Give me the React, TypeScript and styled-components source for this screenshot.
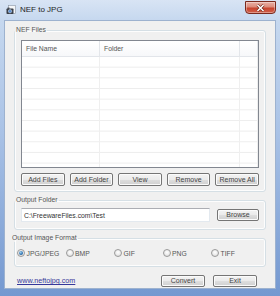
import styled, { createGlobalStyle } from 'styled-components'

const GlobalStyle = createGlobalStyle`
	html, body {
		margin: 0;
		padding: 0;
	}
	body {
		width: 280px;
		height: 296px;
		overflow: hidden;
		background: #7c9ed2;
		font-family: 'Liberation Sans', Arial, sans-serif;
	}
`

const Window = styled.div`
	box-sizing: border-box;
	width: 280px;
	height: 296px;
	display: flex;
	flex-direction: column;
	padding: 0 4px 7px;
	background: linear-gradient(
		180deg,
		#d8e4f4 0px,
		#c6d8ef 20px,
		#a9c2e6 45%,
		#7498d0 100%
	);
`
const TitleBar = styled.div`
	height: 20px;
	display: flex;
	align-items: flex-start;
	flex-shrink: 0;
`
const TitleIcon = styled.svg`
	width: 10px;
	height: 10px;
	margin: 5px 0 0 2px;
`
const TitleText = styled.span`
	margin: 5px 0 0 4px;
	font-size: 8px;
	line-height: 10px;
	color: #1e1e1e;
`
const CloseButton = styled.div`
	box-sizing: border-box;
	margin: 1px 0 0 auto;
	width: 31px;
	height: 13px;
	display: flex;
	align-items: center;
	justify-content: center;
	border: 1px solid #7a2a1e;
	border-radius: 0 0 4px 4px;
	background: linear-gradient(
		180deg,
		#e9b0a4 0%,
		#dc8c7c 45%,
		#c8452f 55%,
		#d0604a 100%
	);
	box-shadow: inset 0 0 0 1px rgba(255, 255, 255, 0.35);
`
const Client = styled.div`
	flex: 1;
	display: flex;
	flex-direction: column;
	gap: 4px;
	padding: 5px 9px 0;
	background: #f0f0f0;
	border: 1px solid #9db2cf;
`
const Group = styled.fieldset<{ $pad: string }>`
	margin: 0;
	min-width: 0;
	padding: ${(p) => p.$pad};
	border: 1px solid #d5dfe5;
	border-radius: 3px;
	box-shadow: inset 0 0 0 1px #fdfdfd;
`
const Legend = styled.legend`
	margin-left: -6px;
	padding: 0 1px;
	font-size: 6.8px;
	line-height: 8px;
	color: #555;
`
const ListView = styled.div`
	height: 128px;
	box-sizing: border-box;
	display: flex;
	flex-direction: column;
	background: #fff;
	border: 1px solid #828790;
`
const Columns = styled.div`
	display: grid;
	grid-template-columns: 78px 140px 1fr;
`
const HeaderRow = styled(Columns)`
	height: 16px;
	box-sizing: border-box;
	border-bottom: 1px solid #e2e5ea;
	background: linear-gradient(180deg, #ffffff 0%, #f7f8fa 100%);
`
const HeaderCell = styled.div`
	display: flex;
	align-items: center;
	padding-left: 4px;
	border-right: 1px solid #e3e6ea;
	font-size: 6.8px;
	color: #555;
`
const Body = styled(Columns)`
	flex: 1;
`
const BodyColumn = styled.div`
	border-right: 1px solid #efefef;
	background-image: linear-gradient(
		180deg,
		transparent calc(100% - 1px),
		#ededed calc(100% - 1px)
	);
	background-size: 100% 10.667px;
`
const ButtonRow = styled.div`
	display: flex;
	gap: 5px;
	margin-top: 5px;
`
const Button = styled.button<{ $width?: number }>`
	box-sizing: border-box;
	height: ${(p) => (p.$width ? 12 : 13)}px;
	${(p) => (p.$width ? `width: ${p.$width}px;` : 'flex: 1;')}
	padding: 0;
	border: 1px solid #757575;
	border-radius: 2px;
	background: linear-gradient(
		180deg,
		#f3f3f3 0%,
		#ebebeb 50%,
		#dedede 51%,
		#d0d0d0 100%
	);
	box-shadow: inset 0 0 0 1px #fbfbfb;
	font-family: 'Liberation Sans', Arial, sans-serif;
	font-size: 7px;
	line-height: 10px;
	color: #444;
`
const FolderRow = styled.div`
	display: flex;
	align-items: center;
	gap: 7px;
`
const TextBox = styled.div`
	flex: 1;
	height: 14px;
	box-sizing: border-box;
	display: flex;
	align-items: center;
	padding-left: 2px;
	background: #fff;
	border: 1px solid #e3e9ef;
	border-top-color: #abadb3;
	font-size: 6.8px;
	color: #333;
`
const RadioRow = styled.div`
	display: flex;
	height: 10px;
	align-items: center;
`
const RadioItem = styled.label`
	width: 48.5px;
	display: flex;
	align-items: center;
	gap: 1.5px;
	font-size: 6.8px;
	color: #555;
`
const RadioDot = styled.span<{ $checked?: boolean }>`
	width: 8px;
	height: 8px;
	box-sizing: border-box;
	border-radius: 50%;
	display: flex;
	align-items: center;
	justify-content: center;
	border: 1px solid #9a9a9a;
	background: radial-gradient(circle at 50% 40%, #ffffff 0%, #e8e8e8 60%, #d2d2d2 100%);
	&::after {
		content: '';
		width: 4px;
		height: 4px;
		border-radius: 50%;
		background: ${(p) =>
			p.$checked
				? 'radial-gradient(circle at 40% 35%, #9fd0ef 0%, #2c6fae 60%, #17456f 100%)'
				: 'transparent'};
	}
`
const Footer = styled.div`
	flex: 1;
	display: flex;
	align-items: center;
	gap: 8px;
	padding: 2px 9px 0 3px;
`
const Link = styled.a`
	margin-right: auto;
	font-size: 7.2px;
	color: #36389a;
	text-decoration: underline;
`

const formats = ['JPG/JPEG', 'BMP', 'GIF', 'PNG', 'TIFF']

export default function App() {
	return (
		<>
			<GlobalStyle />
			<Window>
				<TitleBar>
					<TitleIcon viewBox='0 0 10 10'>
						<rect x='2.5' y='0.5' width='7' height='8' fill='#f4f6f8' stroke='#8a95a3' strokeWidth='0.6' />
						<rect x='0.5' y='3.5' width='7' height='5.5' rx='0.8' fill='#3a3f48' />
						<rect x='1.5' y='2.6' width='2' height='1.2' fill='#3a3f48' />
						<circle cx='4' cy='6.2' r='1.7' fill='#5b8fd0' stroke='#d9e3ee' strokeWidth='0.5' />
					</TitleIcon>
					<TitleText>NEF to JPG</TitleText>
					<CloseButton>
						<svg width='9' height='8' viewBox='0 0 9 8'>
							<path d='M1.5 1 L7.5 7 M7.5 1 L1.5 7' stroke='#6b2418' strokeWidth='2.8' />
							<path d='M1.5 1 L7.5 7 M7.5 1 L1.5 7' stroke='#ffffff' strokeWidth='1.6' />
						</svg>
					</CloseButton>
				</TitleBar>
				<Client>
					<Group $pad='6px 6px 5px'>
						<Legend>NEF Files</Legend>
						<ListView>
							<HeaderRow>
								<HeaderCell>File Name</HeaderCell>
								<HeaderCell>Folder</HeaderCell>
								<HeaderCell />
							</HeaderRow>
							<Body>
								<BodyColumn />
								<BodyColumn />
								<BodyColumn />
							</Body>
						</ListView>
						<ButtonRow>
							<Button>Add Files</Button>
							<Button>Add Folder</Button>
							<Button>View</Button>
							<Button>Remove</Button>
							<Button>Remove All</Button>
						</ButtonRow>
					</Group>
					<Group $pad='4px 6px 7px'>
						<Legend>Output Folder</Legend>
						<FolderRow>
							<TextBox>C:\FreewareFiles.com\Test</TextBox>
							<Button $width={42}>Browse</Button>
						</FolderRow>
					</Group>
					<Group $pad='6px 2px 8px'>
						<Legend>Output Image Format</Legend>
						<RadioRow>
							{formats.map((f, i) => (
								<RadioItem key={f}>
									<RadioDot $checked={i === 0} />
									{f}
								</RadioItem>
							))}
						</RadioRow>
					</Group>
					<Footer>
						<Link href='#'>www.neftojpg.com</Link>
						<Button $width={44}>Convert</Button>
						<Button $width={44}>Exit</Button>
					</Footer>
				</Client>
			</Window>
		</>
	)
}
